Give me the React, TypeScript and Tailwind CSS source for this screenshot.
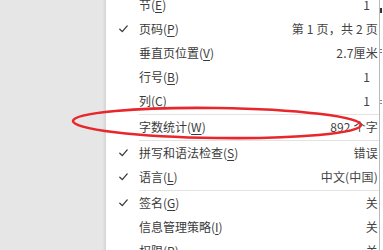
import React from "react";

// Status-bar customise menu (Word style), cropped, with a red hand-drawn ring.

type Item =
  | { kind: "item"; label: string; key: string; value: string; checked?: boolean; num?: boolean }
  | { kind: "sep" };

const items: Item[] = [
  { kind: "item", label: "节", key: "E", value: "1", num: true },
  { kind: "item", label: "页码", key: "P", value: "第 1 页，共 2 页", checked: true },
  { kind: "item", label: "垂直页位置", key: "V", value: "2.7厘米" },
  { kind: "item", label: "行号", key: "B", value: "1", num: true },
  { kind: "item", label: "列", key: "C", value: "1", num: true },
  { kind: "sep" },
  { kind: "item", label: "字数统计", key: "W", value: "892 个字" },
  { kind: "sep" },
  { kind: "item", label: "拼写和语法检查", key: "S", value: "错误", checked: true },
  { kind: "item", label: "语言", key: "L", value: "中文(中国)", checked: true },
  { kind: "sep" },
  { kind: "item", label: "签名", key: "G", value: "关", checked: true },
  { kind: "item", label: "信息管理策略", key: "I", value: "关" },
  { kind: "item", label: "权限", key: "P", value: "关" },
];

function Check() {
  return (
    <svg width="9" height="8" viewBox="0 0 9 8" fill="none">
      <path d="M0.8 4.2 L3.3 6.6 L8.2 0.9" stroke="#3a3a3a" strokeWidth="1.3" strokeLinecap="round" strokeLinejoin="round" />
    </svg>
  );
}

export default function App() {
  return (
    <div className="relative flex h-[250px] w-[383px] overflow-hidden bg-[#e6e6e6] font-['Noto_Sans_CJK_SC','Noto_Sans',sans-serif] text-[12px]">
      <div className="w-[103px] shrink-0" />
      <div className="w-[3px] shrink-0 bg-gradient-to-r from-[#e2e2e2] to-[#d4d4d4]" />

      <div className="w-[274px] shrink-0 border-r border-[#b9b9b9] bg-white">
        <div className="-mt-[7px] flex flex-col">
          {items.map((it, i) =>
            it.kind === "sep" ? (
              <div key={i} className="ml-[33px] h-[2px] border-b border-[#e3e3e3]" />
            ) : (
              <div key={i} className="flex h-6 items-center text-[#3b3b3b]">
                <div className="flex w-[33px] shrink-0 justify-center pl-[2px]">
                  {it.checked && <Check />}
                </div>
                <span className="flex-1 whitespace-nowrap">
                  {it.label}(<span className="underline underline-offset-2">{it.key}</span>)
                </span>
                <span className={`whitespace-nowrap text-[#444] ${it.num ? "pr-[9px]" : "pr-[1px] tracking-[0.2px]"}`}>
                  {it.value}
                </span>
              </div>
            )
          )}
        </div>
      </div>

      <div className="flex w-[3px] shrink-0 flex-col bg-white">
        <div className="mt-[8px] h-[5px] w-[2px] bg-[#333]" />
        <div className="mt-[36px] h-[1px] w-[2px] bg-[#777]" />
        <div className="mt-[2px] h-[1px] w-[2px] bg-[#777]" />
        <div className="mt-[47px] h-[1px] w-[2px] bg-[#888]" />
        <div className="mt-[2px] h-[1px] w-[2px] bg-[#888]" />
      </div>

      <svg className="pointer-events-none absolute left-0 top-0" width="383" height="250" viewBox="0 0 383 250">
        <ellipse cx="217" cy="123" rx="144" ry="15" fill="none" stroke="#e8262b" strokeWidth="2.6" transform="rotate(0.8 217 123)" />
      </svg>
    </div>
  );
}
